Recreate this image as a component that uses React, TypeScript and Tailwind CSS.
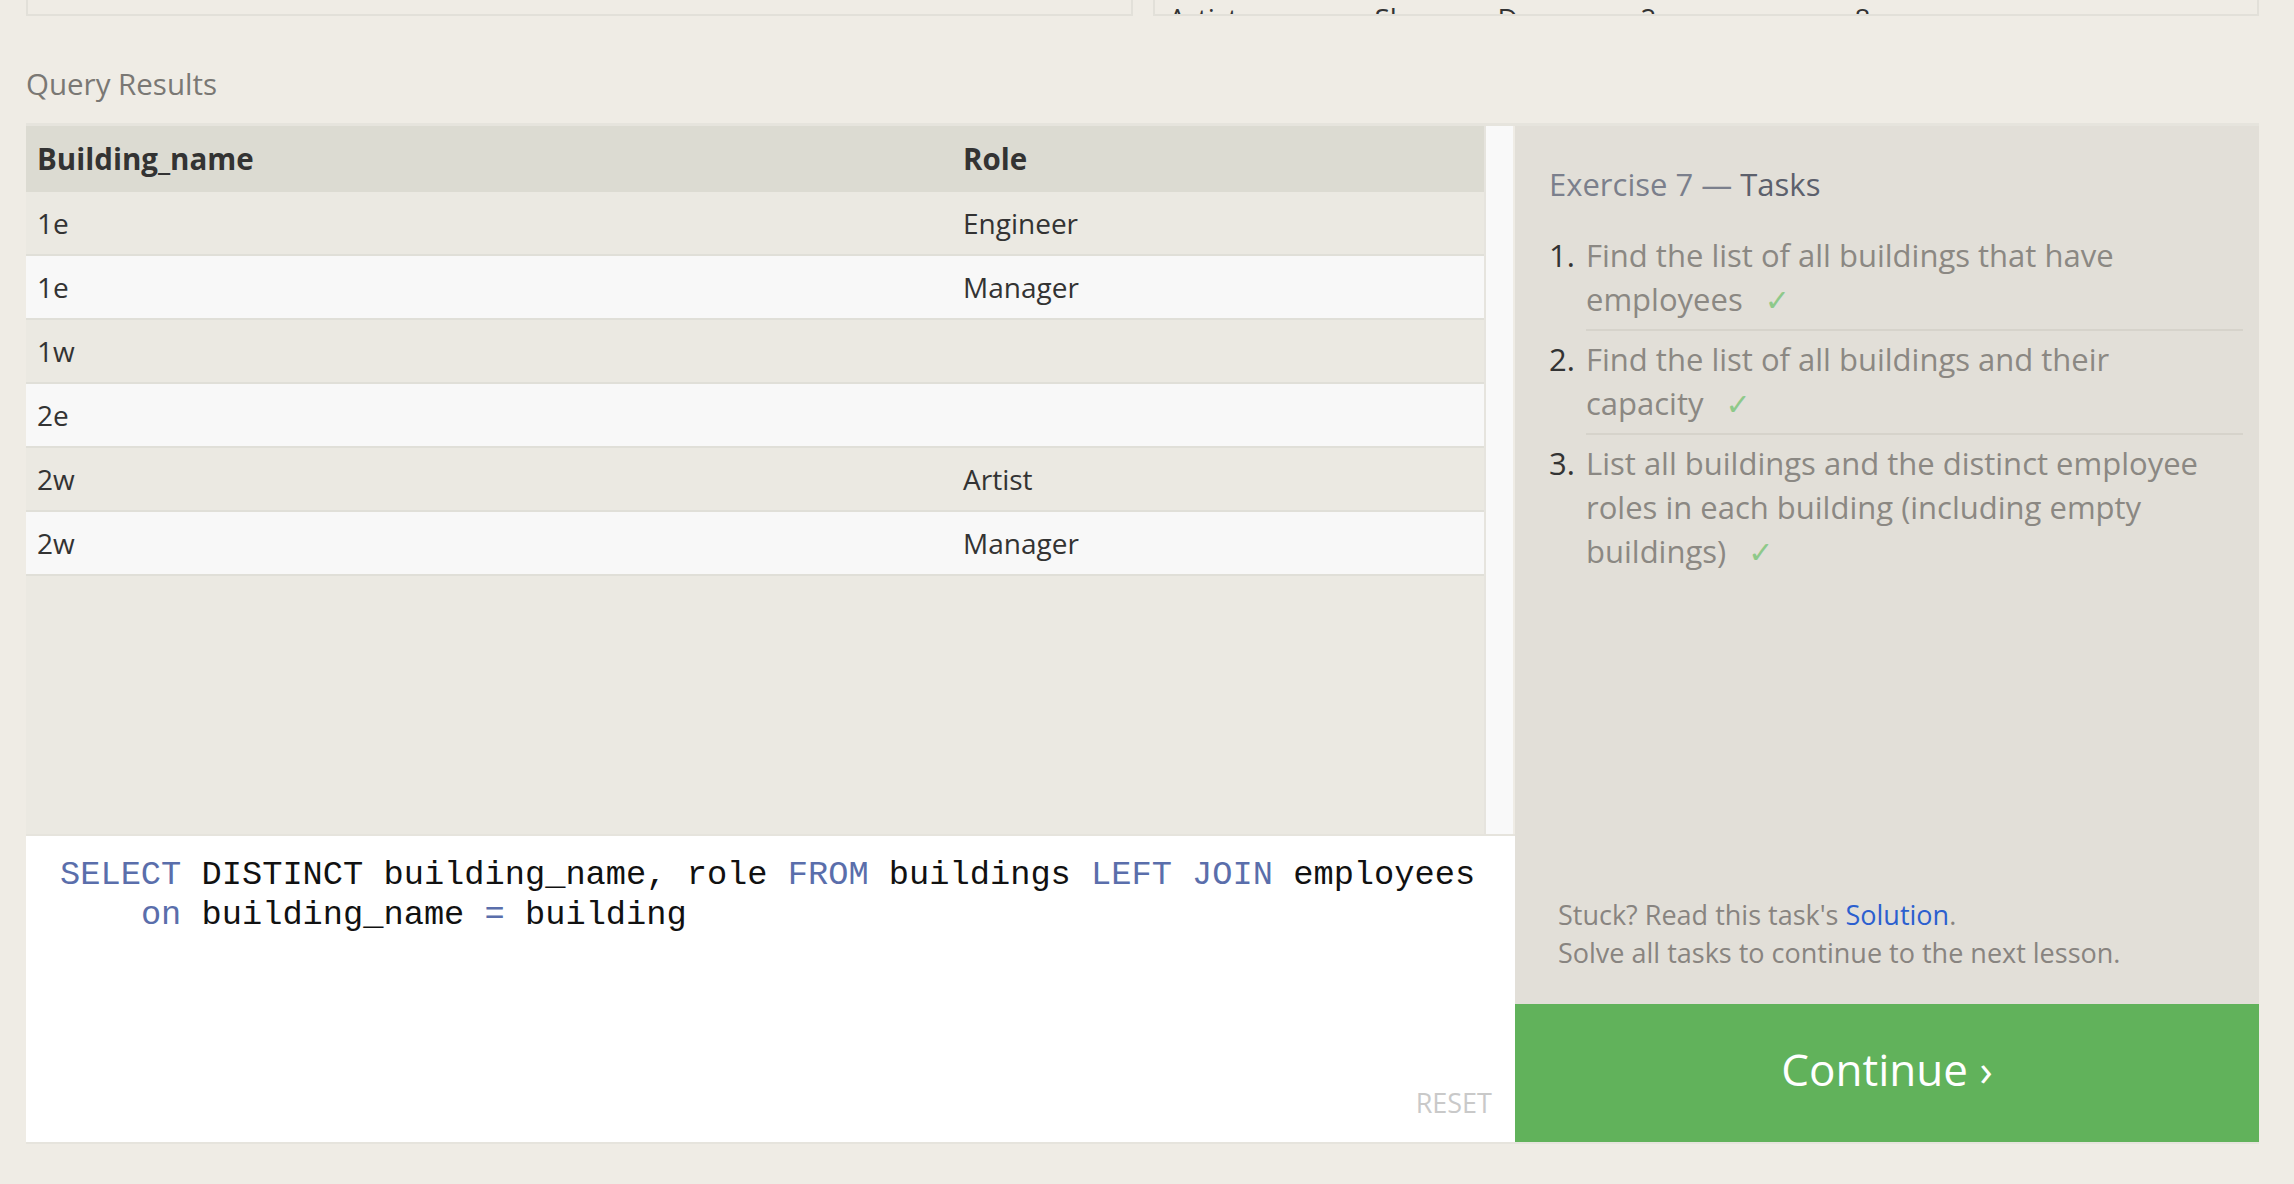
import React from "react";

const rows: [string, string][] = [
  ["1e", "Engineer"],
  ["1e", "Manager"],
  ["1w", ""],
  ["2e", ""],
  ["2w", "Artist"],
  ["2w", "Manager"],
];

function Check() {
  return (
    <span className="ml-[22px] font-['DejaVu_Sans'] text-[30px] leading-none text-[#8ec98a]">✓</span>
  );
}

function Kw({ children }: { children: React.ReactNode }) {
  return <span className="text-[#5a6eab]">{children}</span>;
}

export default function App() {
  return (
    <div className="w-[2294px] h-[1184px] overflow-hidden bg-[#efece5] font-['Open_Sans',sans-serif] pl-[26px] pr-[35px]">
      {/* clipped previous tables */}
      <div className="flex gap-[20px] h-[16px]">
        <div className="flex-1 border-2 border-t-0 border-[#e2e0d9] overflow-hidden"></div>
        <div className="flex-1 border-2 border-t-0 border-[#e2e0d9] overflow-hidden">
          <div className="grid grid-cols-[206px_123px_143px_214px_1fr] pt-[4px] pl-[14px] text-[28px] leading-[28px] text-[#333]">
            <span>Artist</span>
            <span>Shana</span>
            <span>Dw</span>
            <span>2</span>
            <span>8</span>
          </div>
        </div>
      </div>

      <div className="mt-[50px] h-[36px] text-[29.5px] leading-[36px] text-[#7a7874]">Query Results</div>

      <div className="mt-[21px] flex border-t-[3px] border-b-2 border-[#e6e4dd] h-[1021px]">
        {/* left column */}
        <div className="w-[1489px] flex flex-col">
          <div className="h-[708px] flex">
            <div className="w-[1458px] bg-[#ebe9e2] text-[#333]">
              <div className="flex h-[66px] items-center bg-[#dcdbd2] font-bold text-[29.5px]">
                <div className="w-[926px] pl-[11px]">Building_name</div>
                <div className="pl-[11px]">Role</div>
              </div>
              {rows.map((r, i) => (
                <div
                  key={i}
                  className={
                    "flex h-[64px] items-center border-b-2 border-[#e0dfd8] text-[28px] " +
                    (i % 2 === 0 ? "bg-[#ebe9e2]" : "bg-[#f8f8f8]")
                  }
                >
                  <div className="w-[926px] pl-[11px]">{r[0]}</div>
                  <div className="pl-[11px]">{r[1]}</div>
                </div>
              ))}
            </div>
            <div className="w-[2px] bg-[#e6e4de]"></div>
            <div className="w-[27px] bg-[#f9f9f9]"></div>
          </div>
          <div className="flex-1 bg-white border-t-2 border-[#e6e4dd] flex flex-col justify-between">
            <div className="pt-[19px] pl-[34px] font-['Liberation_Mono',monospace] text-[33.7px] leading-[40px] text-[#111] whitespace-pre">
              <div>
                <Kw>SELECT</Kw> DISTINCT building_name, role <Kw>FROM</Kw> buildings <Kw>LEFT JOIN</Kw> employees
              </div>
              <div>
                {"    "}
                <Kw>on</Kw> building_name <Kw>=</Kw> building
              </div>
            </div>
            <div className="text-right pr-[23px] pb-[21px] text-[27px] leading-[36px] text-[#c9c9c9]">RESET</div>
          </div>
        </div>

        {/* right column */}
        <div className="flex-1 flex flex-col">
          <div className="flex-1 bg-[#e2dfd8] pl-[34px] pr-[16px] pt-[38px] flex flex-col">
            <div className="text-[31px] leading-[40px]">
              <span className="text-[#7b7f8c]">Exercise 7 — </span>
              <span className="text-[#5c606c]">Tasks</span>
            </div>
            <div className="mt-[29px] text-[31px] leading-[44px]">
              <div className="grid grid-cols-[37px_1fr]">
                <span className="text-[#333]">1.</span>
                <div className="pb-[8px] border-b-2 border-[#d6d3cb] text-[#8b8883]">
                  Find the list of all buildings that have employees<Check />
                </div>
              </div>
              <div className="grid grid-cols-[37px_1fr] pt-[6px]">
                <span className="text-[#333]">2.</span>
                <div className="pb-[8px] border-b-2 border-[#d6d3cb] text-[#8b8883]">
                  Find the list of all buildings and their capacity<Check />
                </div>
              </div>
              <div className="grid grid-cols-[37px_1fr] pt-[6px]">
                <span className="text-[#333]">3.</span>
                <div className="text-[#8b8883]">
                  List all buildings and the distinct employee roles in each building (including empty buildings)<Check />
                </div>
              </div>
            </div>
            <div className="mt-auto ml-[9px] pb-[32px] text-[27px] leading-[38px] text-[#888480]">
              <div>
                Stuck? Read this task's <span className="text-[#2c5fcf]">Solution</span>.
              </div>
              <div>Solve all tasks to continue to the next lesson.</div>
            </div>
          </div>
          <div className="h-[138px] pb-[8px] bg-[#61b25b] flex items-center justify-center text-white text-[44px]">
            Continue ›
          </div>
        </div>
      </div>
    </div>
  );
}
